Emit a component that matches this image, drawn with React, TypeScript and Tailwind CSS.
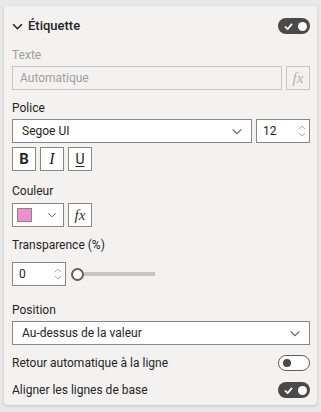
import React from "react";

const font = { fontFamily: '"Segoe UI", Roboto, "Noto Sans", sans-serif' };

function Chevron({ className = "", w = 1.2 }: { className?: string; w?: number }) {
  return (
    <svg viewBox="0 0 12 8" className={className} fill="none" stroke="currentColor" strokeWidth={w}>
      <path d="M1 1.5 L6 6.5 L11 1.5" />
    </svg>
  );
}

function Toggle({ on }: { on: boolean }) {
  if (on) {
    return (
      <div className="w-[32px] h-[16px] rounded-full bg-[#4a4a4a] flex items-center justify-between pl-[6px] pr-[3px]">
        <svg viewBox="0 0 10 8" className="w-[9px] h-[7px]" fill="none" stroke="white" strokeWidth="2">
          <path d="M1 4 L4 7 L9 1" />
        </svg>
        <div className="w-[9px] h-[9px] rounded-full bg-white" />
      </div>
    );
  }
  return (
    <div className="w-[32px] h-[16px] rounded-full border border-[#605e5c] bg-white flex items-center pl-[4px]">
      <div className="w-[8px] h-[8px] rounded-full bg-[#4a4a4a]" />
    </div>
  );
}

function Fx({ disabled }: { disabled?: boolean }) {
  return (
    <div
      className={`w-[24px] h-[24px] flex items-center justify-center border ${
        disabled ? "border-[#c8c6c4] text-[#b3b0ad]" : "border-[#8a8886] bg-white text-[#323130]"
      }`}
    >
      <span className="italic text-[15px] leading-none" style={{ fontFamily: '"Liberation Serif", serif' }}>
        fx
      </span>
    </div>
  );
}

function Spinner({ value, width }: { value: string; width: string }) {
  return (
    <div className={`${width} h-[24px] bg-white border border-[#8a8886] flex items-center justify-between pl-[6px] pr-[3px]`}>
      <span className="text-[12px] text-[#252423]">{value}</span>
      <div className="flex flex-col gap-[2px] text-[#8a8886]">
        <Chevron className="w-[8px] h-[5px] rotate-180" />
        <Chevron className="w-[8px] h-[5px]" />
      </div>
    </div>
  );
}

function Label({ children, className = "" }: { children: React.ReactNode; className?: string }) {
  return <div className={`h-[20px] leading-[20px] text-[12px] text-[#252423] ${className}`}>{children}</div>;
}

export default function App() {
  return (
    <div className="w-[321px] h-[412px] bg-[#e8e8e8] pt-[6px] pl-[4px] pr-[4px]" style={font}>
      <div className="h-[399px] bg-[#f3f2f1] rounded-[4px] shadow-[0_1px_3px_rgba(0,0,0,0.18)] pl-[8px] pr-[7px] pt-[8px]">
        {/* header */}
        <div className="h-[24px] flex items-center justify-between">
          <div className="flex items-center gap-[5px]">
            <Chevron className="w-[11px] h-[7px] text-[#252423]" w={1.8} />
            <span className="text-[13px] font-medium text-[#252423]">Étiquette</span>
          </div>
          <Toggle on />
        </div>

        <Label className="mt-[7px] text-[#a19f9d]">Texte</Label>
        <div className="mt-[1px] flex gap-[4px]">
          <div className="flex-1 h-[24px] border border-[#c8c6c4] flex items-center pl-[7px] text-[12px] text-[#a19f9d]">
            Automatique
          </div>
          <Fx disabled />
        </div>

        <Label className="mt-[8px]">Police</Label>
        <div className="mt-[1px] flex gap-[4px]">
          <div className="flex-1 h-[24px] bg-white border border-[#8a8886] flex items-center justify-between pl-[9px] pr-[8px]">
            <span className="text-[12px] text-[#252423]">Segoe UI</span>
            <Chevron className="w-[12px] h-[7px] text-[#605e5c]" />
          </div>
          <Spinner value="12" width="w-[54px]" />
        </div>

        <div className="mt-[4px] flex gap-[4px]">
          <div className="w-[24px] h-[24px] bg-white border border-[#8a8886] flex items-center justify-center text-[15px] font-bold text-[#252423]">
            B
          </div>
          <div
            className="w-[24px] h-[24px] bg-white border border-[#8a8886] flex items-center justify-center text-[16px] italic text-[#252423]"
            style={{ fontFamily: '"Liberation Serif", serif' }}
          >
            I
          </div>
          <div className="w-[24px] h-[24px] bg-white border border-[#8a8886] flex items-center justify-center text-[14px] underline underline-offset-2 text-[#252423]">
            U
          </div>
        </div>

        <Label className="mt-[10px]">Couleur</Label>
        <div className="mt-[2px] flex gap-[4px]">
          <div className="w-[52px] h-[24px] bg-white border border-[#8a8886] flex items-center justify-between pl-[4px] pr-[6px]">
            <div className="w-[15px] h-[14px] bg-[#ee8fd0] border border-[#8a8886]" />
            <Chevron className="w-[10px] h-[6px] text-[#605e5c]" />
          </div>
          <Fx />
        </div>

        <Label className="mt-[8px]">Transparence (%)</Label>
        <div className="mt-[7px] flex items-center gap-[5px]">
          <Spinner value="0" width="w-[54px]" />
          <div className="flex items-center">
            <div className="w-[13px] h-[13px] rounded-full border-2 border-[#605e5c] bg-white" />
            <div className="w-[71px] h-[4px] bg-[#c8c6c4]" />
          </div>
        </div>

        <Label className="mt-[14px]">Position</Label>
        <div className="mt-[1px] h-[24px] bg-white border border-[#8a8886] flex items-center justify-between pl-[9px] pr-[8px]">
          <span className="text-[12px] text-[#252423]">Au-dessus de la valeur</span>
          <Chevron className="w-[12px] h-[7px] text-[#605e5c]" />
        </div>

        <div className="mt-[6px] h-[24px] flex items-center justify-between">
          <span className="text-[12px] text-[#252423]">Retour automatique à la ligne</span>
          <Toggle on={false} />
        </div>
        <div className="mt-[3px] h-[24px] flex items-center justify-between">
          <span className="text-[12px] text-[#252423]">Aligner les lignes de base</span>
          <Toggle on />
        </div>
      </div>
    </div>
  );
}
